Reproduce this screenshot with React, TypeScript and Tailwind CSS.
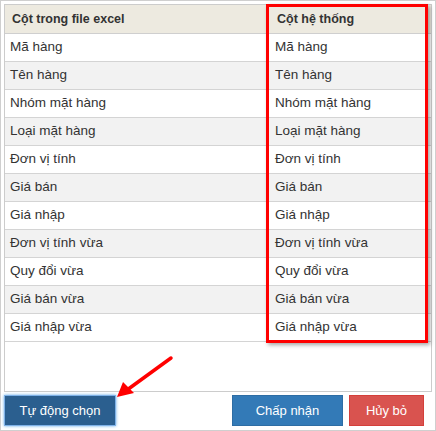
import React from "react";

const rows = [
  "Mã hàng",
  "Tên hàng",
  "Nhóm mặt hàng",
  "Loại mặt hàng",
  "Đơn vị tính",
  "Giá bán",
  "Giá nhập",
  "Đơn vị tính vừa",
  "Quy đổi vừa",
  "Giá bán vừa",
  "Giá nhập vừa",
];

export default function App() {
  return (
    <div
      className="relative w-[436px] h-[431px] bg-white border border-[#cfcfcf] overflow-hidden text-[#333] text-[13.5px]"
      style={{ fontFamily: '"Liberation Sans", Arial, sans-serif' }}
    >
      <div className="mx-[3px] mt-[3px] h-[388px] border border-[#cccccc] bg-white">
        {/* Header */}
        <div className="grid grid-cols-[262px_1fr] h-[29px] bg-[#edeae0] border-b border-[#cfcfcf] font-bold text-[12.5px]">
          <div className="flex items-center pl-[7px]">Cột trong file excel</div>
          <div className="flex items-center pl-[10px]">Cột hệ thống</div>
        </div>
        {/* Rows */}
        {rows.map((r, i) => (
          <div
            key={r}
            className={`grid grid-cols-[262px_1fr] h-[28px] border-b border-[#d4d4d4] ${
              i % 2 === 1 ? "bg-[#f2f2f2]" : "bg-white"
            }`}
          >
            <div className="flex items-center pl-[5px]">{r}</div>
            <div className="flex items-center pl-[8px]">{r}</div>
          </div>
        ))}
      </div>

      {/* Buttons */}
      <div className="flex items-center mt-[3px] px-[3px] text-[13px]">
        <button className="w-[112px] h-[31px] bg-[#2b5f8f] text-white border border-[#7fb2e8] shadow-[0_0_3px_#66afe9]">
          Tự động chọn
        </button>
        <div className="flex-1" />
        <button className="w-[111px] h-[31px] bg-[#337ab7] text-white border border-[#2e6da4]">
          Chấp nhận
        </button>
        <button className="ml-[6px] mr-[8px] w-[75px] h-[31px] bg-[#d9534f] text-white border border-[#d43f3a]">
          Hủy bỏ
        </button>
      </div>

      {/* Red annotation box */}
      <div className="absolute left-[265px] top-[3px] w-[162px] h-[339px] border-[3px] border-[#ff0000] shadow-[2px_2px_4px_rgba(0,0,0,0.35)]" />

      {/* Red arrow */}
      <svg className="absolute left-[110px] top-[352px]" width="70" height="50" viewBox="0 0 70 50">
        <line x1="60" y1="5" x2="16" y2="37" stroke="#ff0000" strokeWidth="3.5" strokeLinecap="round" />
        <polygon points="6,44 12,29 23,40" fill="#ff0000" />
      </svg>
    </div>
  );
}
